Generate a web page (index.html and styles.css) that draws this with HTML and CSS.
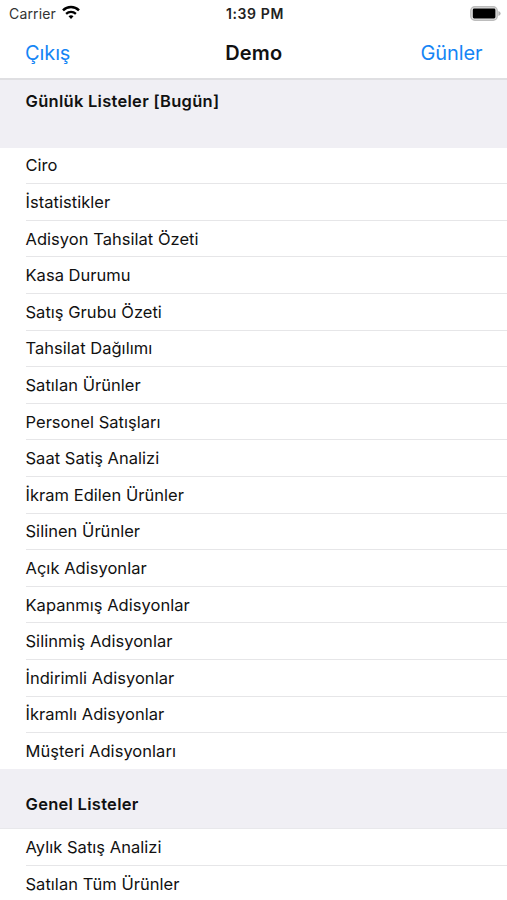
FILE: index.html
```html
<!DOCTYPE html>
<html lang="tr">
<head>
    <meta charset="UTF-8">
    <meta name="viewport" content="width=device-width, initial-scale=1.0">
    <title>Demo</title>
    <link rel="stylesheet" href="styles.css">
</head>
<body>
    <div class="app-container">
        <div class="status-bar">
            <div class="carrier">
                <span>Carrier</span>
                <svg class="wifi" viewBox="0 0 18 14">
                    <path d="M9 14 L6.5 11.3 A3.8 3.8 0 0 1 11.5 11.3 Z" fill="#000"/>
                    <path d="M4.1 8.8 A7.2 7.2 0 0 1 13.9 8.8" fill="none" stroke="#000" stroke-width="2.3"/>
                    <path d="M1 5.4 A11.4 11.4 0 0 1 17 5.4" fill="none" stroke="#000" stroke-width="2.5"/>
                </svg>
            </div>
            <div class="time">1:39 PM</div>
            <div class="battery">
                <svg viewBox="0 0 31 15">
                    <rect x="0.8" y="0.8" width="26.4" height="13.4" rx="4" fill="#e4e4e4" stroke="#bcbcbc" stroke-width="1.4"/>
                    <rect x="2.8" y="2.6" width="22.6" height="9.8" rx="1.4" fill="#000"/>
                    <path d="M28.4 5 Q30.6 5.8 30.6 7.5 Q30.6 9.2 28.4 10 Z" fill="#b0b0b0"/>
                </svg>
            </div>
        </div>

        <header>
            <button class="left">Çıkış</button>
            <h1>Demo</h1>
            <button class="right">Günler</button>
        </header>

        <main>
            <h2 class="first">Günlük Listeler [Bugün]</h2>
            <ul>
                <li><span>Ciro</span></li>
                <li><span>İstatistikler</span></li>
                <li><span>Adisyon Tahsilat Özeti</span></li>
                <li><span>Kasa Durumu</span></li>
                <li><span>Satış Grubu Özeti</span></li>
                <li><span>Tahsilat Dağılımı</span></li>
                <li><span>Satılan Ürünler</span></li>
                <li><span>Personel Satışları</span></li>
                <li><span>Saat Satiş Analizi</span></li>
                <li><span>İkram Edilen Ürünler</span></li>
                <li><span>Silinen Ürünler</span></li>
                <li><span>Açık Adisyonlar</span></li>
                <li><span>Kapanmış Adisyonlar</span></li>
                <li><span>Silinmiş Adisyonlar</span></li>
                <li><span>İndirimli Adisyonlar</span></li>
                <li><span>İkramlı Adisyonlar</span></li>
                <li><span>Müşteri Adisyonları</span></li>
            </ul>
            <h2>Genel Listeler</h2>
            <ul>
                <li><span>Aylık Satış Analizi</span></li>
                <li><span>Satılan Tüm Ürünler</span></li>
            </ul>
        </main>
    </div>
</body>
</html>
```
FILE: styles.css
```css
body {
    font-family: Inter, "Liberation Sans", sans-serif;
    margin: 0;
    padding: 0;
    height: 100vh;
    overflow: hidden;
    background: white;
    color: #111;
}
.app-container {
    width: 100%;
    height: 100vh;
    overflow: hidden;
}
.status-bar {
    display: grid;
    grid-template-columns: 1fr auto 1fr;
    align-items: center;
    height: 27px;
    padding: 0 6px 0 9px;
    font-size: 14px;
}
.carrier {
    display: flex;
    align-items: center;
    gap: 6px;
    color: #333;
    letter-spacing: 0.15px;
}
.wifi {
    width: 18px;
    height: 14px;
    margin-top: -3px;
}
.time {
    font-size: 14px;
    font-weight: 600;
    letter-spacing: 0.6px;
    color: #222;
}
.battery {
    display: flex;
    justify-content: flex-end;
}
.battery svg {
    width: 31px;
    height: 15px;
    margin-top: -1px;
}
header {
    display: grid;
    grid-template-columns: 1fr auto 1fr;
    align-items: center;
    box-sizing: border-box;
    height: 53px;
    padding: 1px 24.5px 0 25px;
    border-bottom: 2px solid #dfdfe2;
}
header h1 {
    margin: 0;
    font-size: 20px;
    font-weight: 600;
    letter-spacing: 0.1px;
}
header button {
    background: none;
    border: none;
    padding: 0;
    color: #1585f5;
    font-family: inherit;
    font-size: 20px;
    letter-spacing: -0.1px;
}
.left {
    justify-self: start;
}
.right {
    justify-self: end;
}
h2 {
    display: flex;
    align-items: center;
    box-sizing: border-box;
    height: 60px;
    margin: 0;
    padding: 10px 25.5px 0;
    background: #f0eff4;
    border-bottom: 1px solid #e8e8eb;
    font-size: 16.5px;
    font-weight: 600;
    letter-spacing: 0.28px;
}
h2.first {
    height: 67.7px;
    padding: 0 25.5px 26px;
    border-bottom: none;
}
ul {
    list-style: none;
    margin: 0;
    padding: 0 0 0 25.5px;
}
li {
    display: flex;
    align-items: center;
    box-sizing: border-box;
    height: 36.6px;
    border-bottom: 1px solid #e6e6e8;
    font-size: 16.5px;
    letter-spacing: 0.03px;
}
li:last-child {
    border-bottom: none;
    height: 36px;
}
```
